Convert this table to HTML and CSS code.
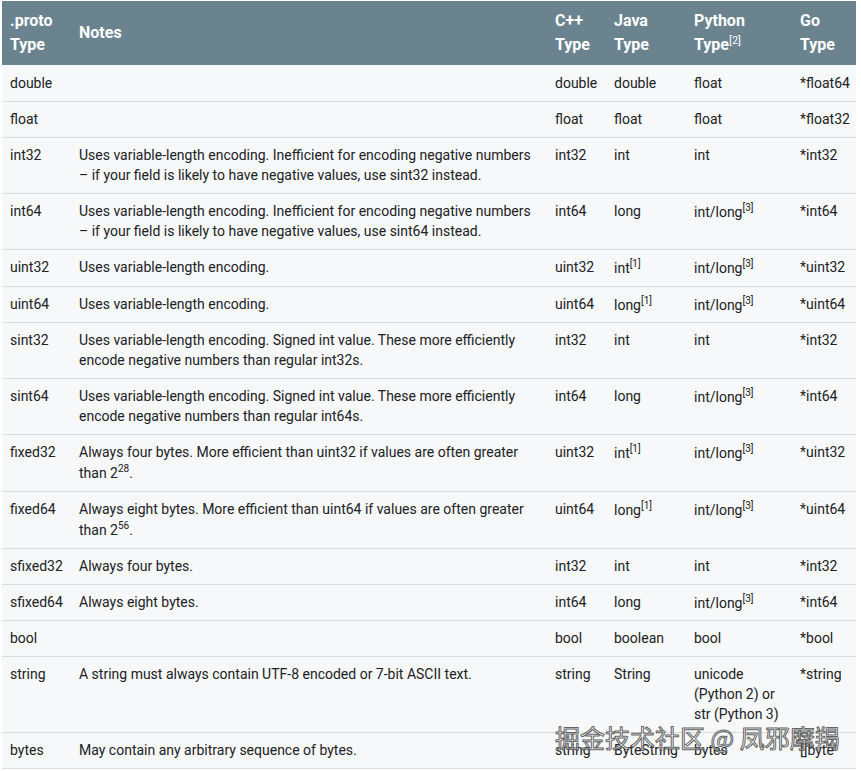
FILE: index.html
```html
<!DOCTYPE html>
<html lang="en">
<head>
<meta charset="utf-8">
<title>Scalar Value Types</title>
<link rel="stylesheet" href="styles.css">
</head>
<body>
<div class="wrap">
<table class="types">
<colgroup>
<col class="c-proto"><col class="c-notes"><col class="c-cpp"><col class="c-java"><col class="c-py"><col class="c-go">
</colgroup>
<thead>
<tr><th>.proto Type</th><th>Notes</th><th>C++ Type</th><th>Java Type</th><th>Python Type<sup>[2]</sup></th><th>Go Type</th></tr>
</thead>
<tbody>
<tr><td>double</td><td></td><td>double</td><td>double</td><td>float</td><td>*float64</td></tr>
<tr><td>float</td><td></td><td>float</td><td>float</td><td>float</td><td>*float32</td></tr>
<tr><td>int32</td><td>Uses variable-length encoding. Inefficient for encoding negative numbers – if your field is likely to have negative values, use sint32 instead.</td><td>int32</td><td>int</td><td>int</td><td>*int32</td></tr>
<tr><td>int64</td><td>Uses variable-length encoding. Inefficient for encoding negative numbers – if your field is likely to have negative values, use sint64 instead.</td><td>int64</td><td>long</td><td>int/long<sup>[3]</sup></td><td>*int64</td></tr>
<tr><td>uint32</td><td>Uses variable-length encoding.</td><td>uint32</td><td>int<sup>[1]</sup></td><td>int/long<sup>[3]</sup></td><td>*uint32</td></tr>
<tr><td>uint64</td><td>Uses variable-length encoding.</td><td>uint64</td><td>long<sup>[1]</sup></td><td>int/long<sup>[3]</sup></td><td>*uint64</td></tr>
<tr><td>sint32</td><td>Uses variable-length encoding. Signed int value. These more efficiently encode negative numbers than regular int32s.</td><td>int32</td><td>int</td><td>int</td><td>*int32</td></tr>
<tr><td>sint64</td><td>Uses variable-length encoding. Signed int value. These more efficiently encode negative numbers than regular int64s.</td><td>int64</td><td>long</td><td>int/long<sup>[3]</sup></td><td>*int64</td></tr>
<tr><td>fixed32</td><td>Always four bytes. More efficient than uint32 if values are often greater than 2<sup>28</sup>.</td><td>uint32</td><td>int<sup>[1]</sup></td><td>int/long<sup>[3]</sup></td><td>*uint32</td></tr>
<tr><td>fixed64</td><td>Always eight bytes. More efficient than uint64 if values are often greater than 2<sup>56</sup>.</td><td>uint64</td><td>long<sup>[1]</sup></td><td>int/long<sup>[3]</sup></td><td>*uint64</td></tr>
<tr><td>sfixed32</td><td>Always four bytes.</td><td>int32</td><td>int</td><td>int</td><td>*int32</td></tr>
<tr><td>sfixed64</td><td>Always eight bytes.</td><td>int64</td><td>long</td><td>int/long<sup>[3]</sup></td><td>*int64</td></tr>
<tr><td>bool</td><td></td><td>bool</td><td>boolean</td><td>bool</td><td>*bool</td></tr>
<tr><td>string</td><td>A string must always contain UTF-8 encoded or 7-bit ASCII text.</td><td>string</td><td>String</td><td>unicode (Python 2) or str (Python 3)</td><td>*string</td></tr>
<tr><td>bytes</td><td>May contain any arbitrary sequence of bytes.</td><td>string</td><td>ByteString</td><td>bytes</td><td>[]byte</td></tr>
</tbody>
</table>
<div class="watermark">掘金技术社区 @ 凤邪摩羯</div>
</div>
</body>
</html>
```
FILE: styles.css
```css
html, body {
  margin: 0;
  padding: 0;
  background: #ffffff;
}
body {
  font-family: Roboto, "Noto Sans", Arial, sans-serif;
  color: #202124;
  overflow: hidden;
}
.wrap {
  position: relative;
  padding: 1px 0 0 2px;
}
.types {
  border-collapse: collapse;
  table-layout: fixed;
  width: 854px;
  background: #f7f8f9;
}
.c-proto { width: 69px; }
.c-notes { width: 476px; }
.c-cpp { width: 59px; }
.c-java { width: 80px; }
.c-py { width: 106px; }
.c-go { width: 64px; }
.types th {
  background: #6b838f;
  color: #ffffff;
  font-weight: 700;
  font-size: 16px;
  line-height: 24px;
  text-align: left;
  vertical-align: middle;
  padding: 8px 8px;
}
.types td {
  font-size: 14px;
  line-height: 20px;
  vertical-align: top;
  padding: 7px 8px 8px;
  border-bottom: 1px solid #dadce0;
}
.types tbody tr:first-child td {
  padding-top: 8px;
}
.types sup {
  font-size: 10px;
  line-height: 14px;
  vertical-align: super;
}
.types th sup {
  font-size: 11px;
  line-height: 0;
  font-weight: 400;
}
.watermark {
  position: absolute;
  left: 555px;
  top: 719px;
  font-family: "Noto Sans CJK SC", sans-serif;
  font-size: 25px;
  line-height: 36px;
  white-space: nowrap;
  color: rgba(255, 255, 255, 0.6);
  -webkit-text-stroke: 1px rgba(80, 80, 80, 0.9);
}
```
